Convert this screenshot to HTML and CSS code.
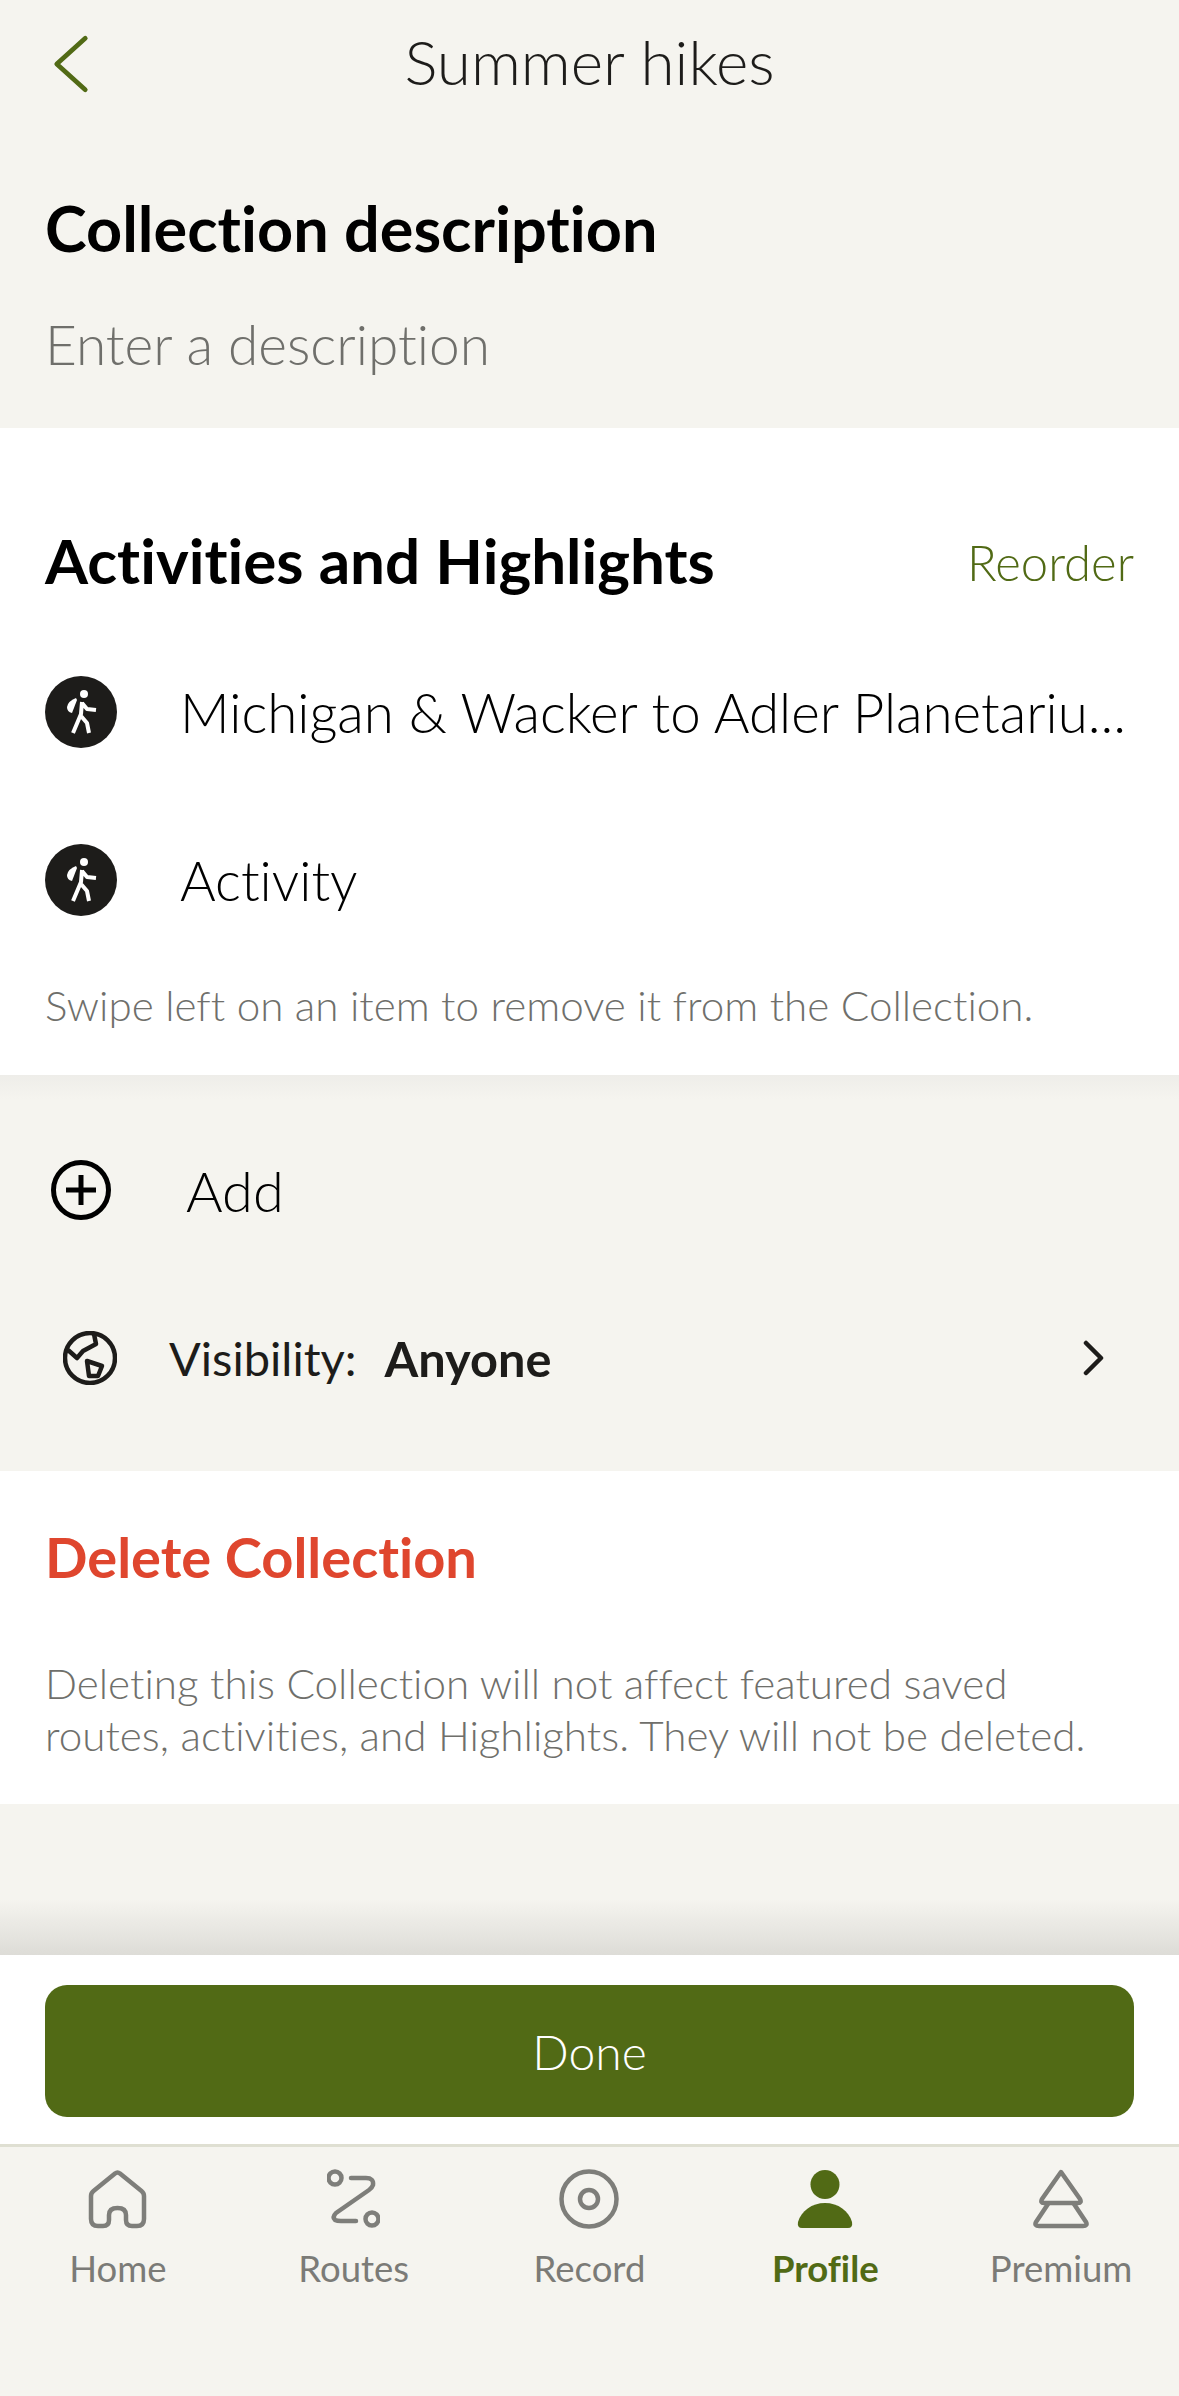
FILE: index.html
```html
<!DOCTYPE html>
<html>
<head>
  <meta charset="UTF-8">
  <title>Summer hikes</title>
  <link rel="stylesheet" href="styles.css">
</head>
<body>
  <div class="page">
    <header class="top-bar">
      <svg class="back-icon" viewBox="0 0 40 60"><path d="M35 3 L5 30 L35 57" /></svg>
      <h1 class="top-title">Summer hikes</h1>
    </header>

    <section class="intro">
      <h2 class="intro-title">Collection description</h2>
      <p class="intro-placeholder">Enter a description</p>
    </section>

    <section class="items">
      <div class="items-head">
        <h2 class="items-title">Activities and Highlights</h2>
        <span class="reorder">Reorder</span>
      </div>
      <div class="item">
        <svg class="hiker" viewBox="0 0 72 72">
          <circle cx="36" cy="36" r="36" fill="#1d1c1a" />
          <circle cx="39" cy="18" r="4" fill="#fff" />
          <path d="M31 22 Q23 25 22 31 Q22 36 27 37 L32 24 Z" fill="#fff" />
          <path class="hiker-line" d="M37 26 L36 38 L28 57 M36 40 L42 47 L44 57 M37 27 L42 33 L51 34" />
        </svg>
        <span class="item-name">Michigan &amp; Wacker to Adler Planetariu...</span>
      </div>
      <div class="item">
        <svg class="hiker" viewBox="0 0 72 72">
          <circle cx="36" cy="36" r="36" fill="#1d1c1a" />
          <circle cx="39" cy="18" r="4" fill="#fff" />
          <path d="M31 22 Q23 25 22 31 Q22 36 27 37 L32 24 Z" fill="#fff" />
          <path class="hiker-line" d="M37 26 L36 38 L28 57 M36 40 L42 47 L44 57 M37 27 L42 33 L51 34" />
        </svg>
        <span class="item-name">Activity</span>
      </div>
      <p class="hint">Swipe left on an item to remove it from the Collection.</p>
    </section>

    <section class="actions">
      <div class="add-row">
        <svg class="add-icon" viewBox="0 0 60 60">
          <circle cx="30" cy="30" r="27.5" />
          <path d="M15 30 H45 M30 15 V45" />
        </svg>
        <span class="add-label">Add</span>
      </div>
      <div class="visibility-row">
        <svg class="globe-icon" viewBox="0 0 54 54">
          <circle cx="27" cy="27" r="25" />
          <path d="M31 3 L33 13 L20 20 L14 27 L5 19" />
          <path d="M24 30 L39 35 L35 45 L26 45 Z" />
        </svg>
        <span class="visibility-label">Visibility:</span>
        <span class="visibility-value">Anyone</span>
        <svg class="chevron" viewBox="0 0 22 36"><path d="M3 3 L18 18 L3 33" /></svg>
      </div>
    </section>

    <section class="danger">
      <h2 class="danger-title">Delete Collection</h2>
      <p class="hint">Deleting this Collection will not affect featured saved<br>routes, activities, and Highlights. They will not be deleted.</p>
    </section>

    <div class="spacer"></div>

    <div class="footer">
      <button class="done-btn">Done</button>
    </div>

    <nav class="tabs">
      <div class="tab">
        <svg class="tab-icon" viewBox="0 0 59 60"><path d="M27 4.5 L5.5 22 Q3 24 3 27 V50 Q3 57 10 57 H15 Q21 57 21 51 V46 Q21 39 29.5 39 Q38 39 38 46 V51 Q38 57 44 57 H49 Q56 57 56 50 V27 Q56 24 53.5 22 L32 4.5 Q29.5 2.5 27 4.5 Z" /></svg>
        <span>Home</span>
      </div>
      <div class="tab">
        <svg class="tab-icon" viewBox="0 0 53 60">
          <circle cx="8" cy="9" r="6.5" />
          <circle cx="45" cy="50" r="6.5" />
          <path d="M24 9 H39 Q47 9 46 16 Q45 19 42 21 L9 44 Q5 48 8 51 Q10 52 14 52 H29" />
        </svg>
        <span>Routes</span>
      </div>
      <div class="tab">
        <svg class="tab-icon" viewBox="0 0 60 60">
          <circle cx="30" cy="30" r="27.5" />
          <circle cx="30" cy="30" r="9" />
        </svg>
        <span>Record</span>
      </div>
      <div class="tab tab-active">
        <svg class="tab-icon" viewBox="0 0 56 60">
          <ellipse cx="28" cy="15.5" rx="14.5" ry="14.5" />
          <path d="M1 53 C4 42 15 34 28 34 C41 34 52 42 55 53 Q56 59 51 59 H5 Q0 59 1 53 Z" />
        </svg>
        <span>Profile</span>
      </div>
      <div class="tab">
        <svg class="tab-icon" viewBox="0 0 56 60">
          <path d="M28 3 L47 30 Q49 34 45 34 H11 Q7 34 9 30 Z" />
          <path d="M15 35 L3 53 Q1 57 6 57 H50 Q55 57 53 53 L41 35" />
        </svg>
        <span>Premium</span>
      </div>
    </nav>
  </div>
</body>
</html>
```

FILE: styles.css
```css
body {
  margin: 0;
  padding: 0;
  font-family: Lato, 'Open Sans', sans-serif;
  font-variant-ligatures: none;
  background: #f5f4ef;
  color: #1d1c1a;
}
h1, h2, p {
  margin: 0;
}
.page {
  width: 1179px;
  height: 2396px;
  display: flex;
  flex-direction: column;
  overflow: hidden;
}

/* top bar */
.top-bar {
  position: relative;
  height: 128px;
  padding-bottom: 6px;
  box-sizing: border-box;
  display: flex;
  align-items: center;
  justify-content: center;
}
.back-icon {
  position: absolute;
  left: 52px;
  top: 31px;
  width: 38px;
  height: 66px;
  fill: none;
  stroke: #516a15;
  stroke-width: 5;
  stroke-linecap: round;
  stroke-linejoin: round;
}
.top-title {
  font-size: 62px;
  font-weight: 300;
}

.intro {
  height: 300px;
  padding: 64px 45px 0;
  box-sizing: border-box;
}
.intro-title {
  font-size: 63px;
  font-weight: 700;
  color: #000;
  line-height: 72px;
}
.intro-placeholder {
  font-size: 55px;
  font-weight: 300;
  color: #6f6f6b;
  margin-top: 49px;
  line-height: 62px;
}

/* activities and highlights */
.items {
  height: 647px;
  background: #fff;
  padding: 100px 45px 0;
  box-sizing: border-box;
}
.items-head {
  display: flex;
  justify-content: space-between;
  align-items: center;
  height: 64px;
  margin-bottom: 84px;
}
.items-title {
  font-size: 62px;
  font-weight: 700;
  color: #000;
}
.reorder {
  font-size: 49px;
  font-weight: 300;
  color: #516a15;
  padding-top: 4px;
}
.item {
  display: flex;
  align-items: center;
  height: 72px;
  margin-bottom: 96px;
}
.hiker {
  width: 72px;
  height: 72px;
  flex: none;
}
.hiker-line {
  fill: none;
  stroke: #fff;
  stroke-width: 4;
  stroke-linejoin: round;
}
.item-name {
  font-size: 54.7px;
  font-weight: 300;
  margin-left: 63px;
  color: #000;
  white-space: nowrap;
}
.hint {
  font-size: 42.2px;
  font-weight: 300;
  line-height: 52px;
  color: #6f6f6b;
}
.items .hint {
  margin-top: -33px;
}

/* add + visibility */
.actions {
  height: 396px;
  background: linear-gradient(#eeede9, #f5f4ef 24px);
  box-sizing: border-box;
  padding-top: 85px;
}
.add-row {
  display: flex;
  align-items: center;
  height: 60px;
  padding-left: 51px;
}
.add-icon {
  width: 60px;
  height: 60px;
  fill: none;
  stroke: #000;
  stroke-width: 5;
}
.add-label {
  font-size: 56px;
  font-weight: 300;
  margin-left: 75px;
  color: #000;
}
.visibility-row {
  display: flex;
  align-items: center;
  height: 54px;
  margin-top: 111px;
  padding-left: 63px;
  padding-right: 74px;
}
.globe-icon {
  width: 54px;
  height: 54px;
  fill: none;
  stroke: #1d1c1a;
  stroke-width: 4.5;
  stroke-linejoin: round;
}
.visibility-label {
  font-size: 47px;
  margin-left: 52px;
}
.visibility-value {
  font-size: 48.7px;
  font-weight: 700;
  margin-left: 28px;
}
.chevron {
  width: 22px;
  height: 36px;
  margin-left: auto;
  fill: none;
  stroke: #1d1c1a;
  stroke-width: 4.5;
  stroke-linecap: round;
  stroke-linejoin: round;
}

/* delete */
.danger {
  height: 333px;
  background: #fff;
  padding: 56px 45px 0;
  box-sizing: border-box;
}
.danger-title {
  font-size: 56px;
  font-weight: 700;
  color: #df462e;
  line-height: 60px;
  margin-bottom: 70px;
}

.spacer {
  height: 151px;
  background: linear-gradient(#f5f4ef 95px, #dddcd7);
}

.footer {
  height: 189px;
  background: #fff;
  padding: 30px 45px 0;
  box-sizing: border-box;
}
.done-btn {
  display: block;
  width: 100%;
  height: 132px;
  border: none;
  border-radius: 22px;
  background: #516a15;
  color: #fff;
  font-family: inherit;
  font-weight: 300;
  font-size: 48px;
}

/* bottom tabs */
.tabs {
  flex: 1;
  display: grid;
  grid-template-columns: repeat(5, 1fr);
  border-top: 3px solid #dfdfd2;
  padding-top: 22px;
}
.tab {
  display: flex;
  flex-direction: column;
  align-items: center;
  font-size: 36.5px;
  color: #7b7b77;
}
.tab-icon {
  height: 60px;
  fill: none;
  stroke: #7e7e7a;
  stroke-width: 4.5;
  stroke-linecap: round;
  stroke-linejoin: round;
  margin-bottom: 17px;
}
.tab-active {
  color: #516a15;
  font-weight: 700;
}
.tab-active .tab-icon {
  fill: #516a15;
  stroke: none;
}
```
